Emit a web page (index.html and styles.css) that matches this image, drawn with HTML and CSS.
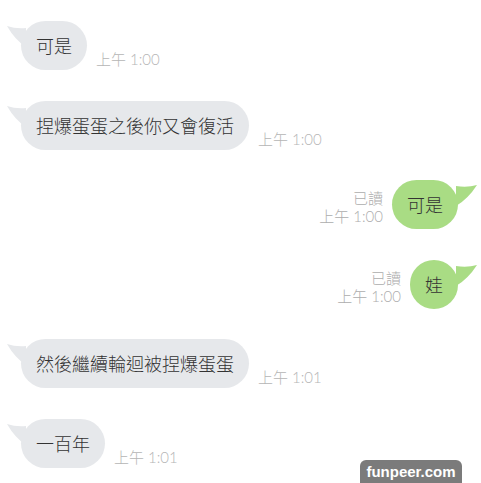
FILE: index.html
```html
<!DOCTYPE html>
<html lang="zh-Hant">
<head>
<meta charset="utf-8">
<title>Chat</title>
<link rel="stylesheet" href="styles.css">
</head>
<body>
<div class="chat">
  <div class="row in">
    <div class="bubble gray">可是<svg class="tail tail-l" viewBox="0 0 20 30" width="20" height="30"><path d="M0 5 Q9 8 19 7 L19 26 Q8 19 0 5 Z"/></svg></div>
    <div class="time">上午 1:00</div>
  </div>
  <div class="row in">
    <div class="bubble gray">捏爆蛋蛋之後你又會復活<svg class="tail tail-l" viewBox="0 0 20 30" width="20" height="30"><path d="M0 5 Q9 8 19 7 L19 26 Q8 19 0 5 Z"/></svg></div>
    <div class="time">上午 1:00</div>
  </div>
  <div class="row out">
    <div class="meta"><div>已讀</div><div>上午 1:00</div></div>
    <div class="bubble green">可是<svg class="tail tail-r" viewBox="0 0 22 30" width="22" height="30"><path d="M22 5 Q12 8 1 6 L1 26 Q13 19 22 5 Z"/></svg></div>
  </div>
  <div class="row out">
    <div class="meta"><div>已讀</div><div>上午 1:00</div></div>
    <div class="bubble green">娃<svg class="tail tail-r" viewBox="0 0 22 30" width="22" height="30"><path d="M22 5 Q12 8 1 6 L1 26 Q13 19 22 5 Z"/></svg></div>
  </div>
  <div class="row in">
    <div class="bubble gray">然後繼續輪迴被捏爆蛋蛋<svg class="tail tail-l" viewBox="0 0 20 30" width="20" height="30"><path d="M0 5 Q9 8 19 7 L19 26 Q8 19 0 5 Z"/></svg></div>
    <div class="time">上午 1:01</div>
  </div>
  <div class="row in">
    <div class="bubble gray">一百年<svg class="tail tail-l" viewBox="0 0 20 30" width="20" height="30"><path d="M0 5 Q9 8 19 7 L19 26 Q8 19 0 5 Z"/></svg></div>
    <div class="time">上午 1:01</div>
  </div>
</div>
<div class="watermark">funpeer.com</div>
</body>
</html>
```

FILE: styles.css
```css
html, body {
  margin: 0;
  padding: 0;
  background: #ffffff;
  overflow: hidden;
  height: 483px;
}
body {
  position: relative;
  font-family: "Noto Sans CJK TC", "Noto Sans", sans-serif;
}
.chat {
  display: flex;
  flex-direction: column;
  gap: 30.6px;
  padding: 21px 23px 0 21px;
}
.row {
  display: flex;
  align-items: flex-end;
}
.row.out {
  justify-content: flex-end;
}
.bubble {
  position: relative;
  height: 49px;
  line-height: 49px;
  padding: 0 15px;
  border-radius: 25px;
  font-size: 18px;
  font-weight: 300;
  color: #333333;
  white-space: nowrap;
}
.bubble.gray {
  background: #e6e8eb;
}
.bubble.green {
  background: #a9dc84;
}
.tail {
  position: absolute;
  top: 0;
}
.tail-l {
  left: -14px;
}
.tail-l path {
  fill: #e6e8eb;
}
.tail-r {
  right: -19px;
}
.tail-r path {
  fill: #a9dc84;
}
.time,
.meta {
  font-family: Lato, "Noto Sans CJK TC", sans-serif;
  font-weight: 300;
  font-size: 15px;
  color: #b5b5b5;
  line-height: 18px;
}
.time {
  margin-left: 9px;
  margin-bottom: 2px;
}
.meta {
  text-align: right;
  margin-right: 9px;
  margin-bottom: 4px;
  color: #adadad;
}
.watermark {
  position: absolute;
  left: 360px;
  top: 460px;
  width: 102px;
  height: 28px;
  border-radius: 6px;
  background: #7b7b7b;
  color: #ffffff;
  font-family: "Liberation Sans", Arial, sans-serif;
  font-weight: bold;
  font-size: 15px;
  line-height: 24px;
  text-align: center;
}
```
